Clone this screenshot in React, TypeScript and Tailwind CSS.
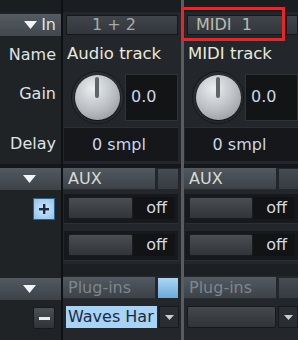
import React from "react";

function Tri({ className = "" }: { className?: string }) {
  return (
    <svg width="13" height="8" viewBox="0 0 13 8" className={className}>
      <polygon points="0,0 13,0 6.5,8" fill="#f2f4f6" />
    </svg>
  );
}

function SmallTri() {
  return (
    <svg width="9" height="5" viewBox="0 0 9 5">
      <polygon points="0,0 9,0 4.5,5" fill="#c9ced3" />
    </svg>
  );
}

function Knob() {
  return (
    <div className="w-[53px] h-[53px] rounded-full bg-[#2b2f33] border border-[#15171a] flex items-center justify-center">
      <div className="relative w-[45px] h-[45px] rounded-full bg-[radial-gradient(circle_at_40%_30%,#eceef0,#b8bcc0_55%,#868b90)] shadow-[0_1px_2px_rgba(0,0,0,0.8)]">
        <div className="absolute left-[20px] top-[2px] w-[4px] h-[21px] rounded-full bg-[#5f6468]" />
      </div>
    </div>
  );
}

function Fader() {
  return (
    <div className="h-[22px] flex-1 rounded-[2px] bg-linear-to-b from-[#4a4e53] to-[#313438] border border-[#1a1c1e]" />
  );
}

function SendRow({ w }: { w: string }) {
  return (
    <div className="h-[37px] flex items-center">
      <div className={`${w} h-[30px] ml-[1px] bg-[#17191c] flex items-center pl-[4px] pr-[3px] border-b border-[#2c3034]`}>
        <Fader />
        <div className="w-[42px] h-[22px] bg-[#111315] flex items-center justify-end pr-[8px] text-[#d6dae2]">off</div>
      </div>
    </div>
  );
}

function Header({ label, dim, hi }: { label: string; dim?: boolean; hi?: boolean }) {
  return (
    <div className="h-[22px] flex gap-[2px]">
      <div className={`w-[92px] shrink-0 bg-linear-to-b from-[#525960] to-[#3c4248] border-b border-[#2a2e33] flex items-center pl-[5px] ${dim ? "text-[#7f868d]" : "text-[#d8dcd2]"}`}>
        {label}
      </div>
      <div className={`w-[22px] shrink-0 border border-[#23272b] ${hi ? "bg-linear-to-b from-[#a9d6f7] to-[#6fa9d6]" : "bg-linear-to-b from-[#464c52] to-[#363b40]"}`} />
    </div>
  );
}

function LabelColumn() {
  return (
    <div className="w-[61px] shrink-0 flex flex-col bg-[#202326] text-[#dfe2e4]">
      <div className="h-[12px] bg-[#1b1e21]" />
      <div className="h-[27px] pt-[2px]">
        <div className="h-[22px] bg-linear-to-b from-[#545b62] to-[#41474d] flex items-center justify-end pr-[5px] gap-[4px]">
          <Tri />
          <span>In</span>
        </div>
      </div>
      <div className="h-[31px] flex items-center justify-end pr-[5px]">Name</div>
      <div className="h-[54px] flex items-center justify-end pr-[5px] pb-[6px]">Gain</div>
      <div className="h-[40px] flex items-center justify-end pr-[5px]">Delay</div>
      <div className="h-[4px] bg-[#15171a]" />
      <div className="h-[22px] bg-linear-to-b from-[#525960] to-[#3c4248] flex items-center justify-center pr-[2px]">
        <Tri />
      </div>
      <div className="h-[37px] flex items-center justify-end pr-[6px]">
        <div className="w-[22px] h-[22px] border border-[#2f5f85] bg-[radial-gradient(circle,#cfe8fd,#8fc2ea)] flex items-center justify-center">
          <svg width="10" height="10" viewBox="0 0 10 10">
            <rect x="4" y="0" width="2.4" height="10" fill="#1d2b3c" />
            <rect x="0" y="4" width="10" height="2.4" fill="#1d2b3c" />
          </svg>
        </div>
      </div>
      <div className="h-[38px]" />
      <div className="h-[12px]" />
      <div className="h-[24px] pt-[1px]">
        <div className="h-[22px] bg-linear-to-b from-[#525960] to-[#3c4248] flex items-center justify-center pr-[2px]">
          <Tri />
        </div>
      </div>
      <div className="h-[34px] flex items-center justify-end pr-[6px]">
        <div className="w-[22px] h-[22px] rounded-[2px] border border-[#17191b] bg-linear-to-b from-[#4b5056] to-[#2f3337] flex items-center justify-center">
          <div className="w-[11px] h-[3px] bg-[#e8eaec]" />
        </div>
      </div>
    </div>
  );
}

function Channel({ w, input, name, midi, plugin }: { w: string; input: string; name: string; midi?: boolean; plugin?: string }) {
  return (
    <div className={`${w} shrink-0 flex flex-col bg-[#23272b] text-[#e2e0d6]`}>
      <div className="h-[12px] bg-[#1b1e21]" />
      <div className="h-[27px] flex items-start pt-[3px] pl-[3px] gap-[3px]">
        <div
          className={`h-[20px] ${midi ? "w-[96px]" : "w-[112px]"} shrink-0 bg-linear-to-b from-[#40454b] to-[#33373c] border border-[#15171a] flex items-center ${midi ? "pl-[8px] text-[#b9bdb0]" : "pl-[25px] text-[#a7abae]"} whitespace-pre`}
        >
          {input}
        </div>
        {midi && <div className="h-[20px] flex-1 bg-linear-to-b from-[#40454b] to-[#33373c] border border-[#15171a]" />}
      </div>
      <div className="h-[31px] flex items-center pl-[4px] text-[#ebe8dc] text-[16.5px]">{name}</div>
      <div className="h-[54px] flex items-center pl-[8px] gap-[1px]">
        <Knob />
        <div className="w-[53px] h-[47px] shrink-0 bg-[#121416] border border-[#2f3337] flex items-center pl-[5px] text-[#cdd5e6]">0.0</div>
      </div>
      <div className="h-[40px] flex items-center pl-[1px]">
        <div className="w-[114px] h-[34px] bg-[#15171a] border-t border-[#2c3034] flex items-center justify-center pr-[4px] text-[#cdd5e6]">0 smpl</div>
      </div>
      <div className="h-[4px] bg-[#15171a]" />
      <Header label="AUX" />
      <SendRow w="w-[114px]" />
      <SendRow w="w-[114px]" />
      <div className="h-[12px] bg-[#1d2023]" />
      <div className="h-[24px] pt-[1px]">
        <Header label="Plug-ins" dim hi={!midi} />
      </div>
      <div className="h-[34px] flex items-center pl-[3px] gap-[2px]">
        {plugin ? (
          <div className="w-[91px] h-[22px] bg-[#a9d3f5] text-[#1b2a44] flex items-center pl-[2px] overflow-hidden whitespace-nowrap">{plugin}</div>
        ) : (
          <div className="w-[91px] h-[22px] rounded-[2px] bg-linear-to-b from-[#45494e] to-[#303337] border border-[#17191b]" />
        )}
        <div className="w-[20px] h-[22px] bg-[#2a2d31] border border-[#17191b] flex items-center justify-center">
          <SmallTri />
        </div>
      </div>
    </div>
  );
}

export default function App() {
  return (
    <div className="relative w-[298px] h-[340px] overflow-hidden bg-[#1b1e21] font-['DejaVu_Sans',Verdana,sans-serif] text-[16px] leading-none flex">
      <LabelColumn />
      <div className="w-[2px] shrink-0 bg-[#0e1012]" />
      <Channel w="w-[118px]" input="1 + 2" name="Audio track" plugin="Waves Har" />
      <div className="w-[3px] shrink-0 bg-[#585d62]" />
      <Channel w="w-[114px]" input="MIDI  1" name="MIDI track" midi />
      <div className="absolute left-[181px] top-[7px] w-[104px] h-[34px] border-[3px] border-[#e8262a]" />
    </div>
  );
}
